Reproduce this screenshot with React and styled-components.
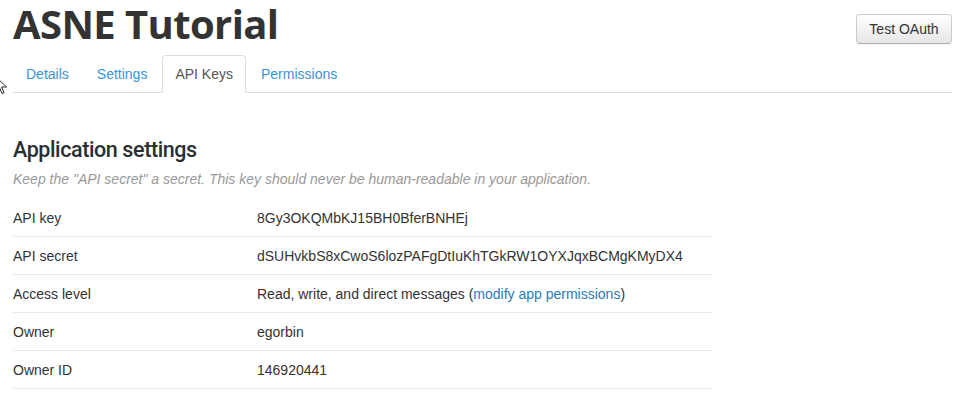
import React from 'react'
import styled, { createGlobalStyle } from 'styled-components'

const GlobalStyle = createGlobalStyle`
  html, body {
    margin: 0;
    padding: 0;
    background: #fff;
    font-family: "Liberation Sans", Arial, sans-serif;
    font-size: 14px;
    color: #333;
  }
`

const Page = styled.div`
  position: relative;
  padding: 0 16px 0 13px;
  overflow: hidden;
  height: 417px;
  box-sizing: border-box;
`

const Header = styled.div`
  display: flex;
  justify-content: space-between;
  align-items: flex-start;
`

const Title = styled.h1`
  margin: 0;
  font-family: "Open Sans", sans-serif;
  font-weight: 700;
  font-size: 40px;
  line-height: 48px;
  letter-spacing: -0.6px;
  color: #333;
`

const Button = styled.button`
  margin-top: 14px;
  width: 96px;
  height: 30px;
  padding: 0 12px;
  font-family: "Liberation Sans", Arial, sans-serif;
  font-size: 14px;
  color: #333;
  background: linear-gradient(#fff, #e6e6e6);
  border: 1px solid #ccc;
  border-bottom-color: #b3b3b3;
  border-radius: 4px;
  box-shadow: inset 0 1px 0 rgba(255, 255, 255, 0.2), 0 1px 2px rgba(0, 0, 0, 0.05);
`

const Tabs = styled.ul`
  display: flex;
  list-style: none;
  margin: 7px 0 0;
  padding: 0;
  border-bottom: 1px solid #ddd;
`

const Tab = styled.li`
  margin-right: 2px;
  margin-bottom: -1px;
  padding: 8px 12px;
  line-height: 20px;
  border: 1px solid ${({ $active }) => ($active ? '#ddd' : 'transparent')};
  border-bottom-color: ${({ $active }) => ($active ? '#fff' : 'transparent')};
  border-radius: 4px 4px 0 0;
  background: ${({ $active }) => ($active ? '#fff' : 'transparent')};
  color: ${({ $active }) => ($active ? '#555' : '#3b94d9')};
  cursor: pointer;
`

const Section = styled.div`
  margin-top: 42px;
`

const Heading = styled.h2`
  margin: 0;
  font-family: "Roboto", sans-serif;
  font-weight: 500;
  font-size: 21.5px;
  line-height: 30px;
  letter-spacing: -0.4px;
  color: #292f33;
`

const Note = styled.p`
  margin: 4px 0 0;
  font-style: italic;
  font-size: 14px;
  line-height: 20px;
  color: #999;
`

const Table = styled.div`
  width: 699px;
  margin-top: 10px;
`

const Row = styled.div`
  display: grid;
  grid-template-columns: 244px 1fr;
  align-items: center;
  height: 37px;
  border-bottom: 1px solid #e8e8e8;
  color: #333;
`

const Link = styled.a`
  color: #2b7bb9;
  text-decoration: none;
`

const Cursor = styled.svg`
  position: absolute;
  left: -5px;
  top: 76px;
`

const rows = [
  ['API key', '8Gy3OKQMbKJ15BH0BferBNHEj'],
  ['API secret', 'dSUHvkbS8xCwoS6lozPAFgDtIuKhTGkRW1OYXJqxBCMgKMyDX4'],
  ['Access level', <>Read, write, and direct messages (<Link href="#">modify app permissions</Link>)</>],
  ['Owner', 'egorbin'],
  ['Owner ID', '146920441'],
]

export default function App() {
  return (
    <>
      <GlobalStyle />
      <Page>
        <Header>
          <Title>ASNE Tutorial</Title>
          <Button>Test OAuth</Button>
        </Header>
        <Tabs>
          <Tab>Details</Tab>
          <Tab>Settings</Tab>
          <Tab $active>API Keys</Tab>
          <Tab>Permissions</Tab>
        </Tabs>
        <Section>
          <Heading>Application settings</Heading>
          <Note>Keep the "API secret" a secret. This key should never be human-readable in your application.</Note>
          <Table>
            {rows.map(([label, value]) => (
              <Row key={label}>
                <span>{label}</span>
                <span>{value}</span>
              </Row>
            ))}
          </Table>
        </Section>
        <Cursor width="14" height="20" viewBox="0 0 14 20">
          <path d="M1 1 L1 15 L4.5 11.5 L7 17.5 L9 16.7 L6.6 11 L11.5 11 Z" fill="#fff" stroke="#222" strokeWidth="1" strokeLinejoin="round" />
        </Cursor>
      </Page>
    </>
  )
}
